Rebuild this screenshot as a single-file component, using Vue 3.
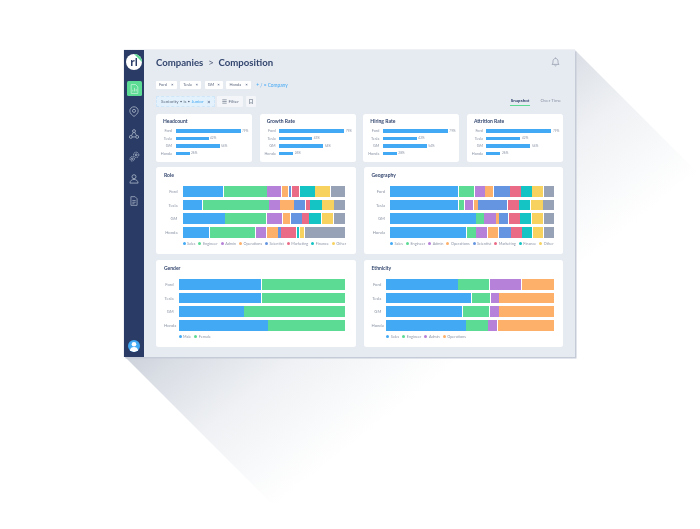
<script setup>
const c = { sa:'#42a9f5', en:'#5bdb93', ad:'#b681d8', op:'#fdb069', sc:'#6595e0', ma:'#e96b85', fi:'#14c3c3', ot:'#f7d25f', gr:'#98a2b6' }
const roleKeys = ['sa','en','ad','op','sc','ma','fi','ot','gr']
const mk = (keys, rows) => rows.map(r => ({ name: r[0], segs: r.slice(1).map((w, i) => ({ w, color: c[keys[i]] })) }))
const minis = [
  { title:'Headcount', v:[[65,'79%'],[33,'42%'],[44,'54%'],[14,'26%']] },
  { title:'Growth Rate', v:[[65,'79%'],[33,'43%'],[44,'54%'],[14,'26%']] },
  { title:'Hiring Rate', v:[[65,'79%'],[34,'42%'],[44,'54%'],[14,'28%']] },
  { title:'Attrition Rate', v:[[65,'79%'],[34,'42%'],[44,'54%'],[14,'26%']] },
]
const names = ['Ford','Tesla','GM','Honda']
const legend8 = ['Sales','Engineer','Admin','Operations','Scientist','Marketing','Finance','Other']
const charts = [
  { title:'Role', lw:18.5, legend:legend8, keys:roleKeys,
    rows: mk(roleKeys, [
      ['Ford',125,133,42,21,7,23,46,45,44],
      ['Tesla',60,204,32,42,33,12,35,35,33],
      ['GM',130,127,47,22,35,19,36,36,34],
      ['Honda',82,140,32,34,8,46,7,13,124],
    ]) },
  { title:'Geography', lw:18.5, legend:legend8, keys:roleKeys,
    rows: mk(roleKeys, [
      ['Ford',211,47,31,25,48,32,33,34,31],
      ['Tesla',210,18,26,12,88,35,33,37,33],
      ['GM',265,23,35,7,27,35,33,35,32],
      ['Honda',236,27,33,33,36,33,30,33,31],
    ]) },
  { title:'Gender', lw:14.6, legend:['Male','Female'], keys:['sa','en'],
    rows: mk(['sa','en'], [
      ['Ford',248,249],['Tesla',247,250],['GM',195,302],['Honda',267,230],
    ]) },
  { title:'Ethnicity', lw:14.8, legend:['Sales','Engineer','Admin','Operations'], keys:['sa','en','ad','op'],
    rows: mk(['sa','en','ad','op'], [
      ['Ford',217,93,96,97],['Tesla',257,57,23,166],['GM',230,80,27,166],['Honda',241,64,28,170],
    ]) },
]
charts.forEach(ch => { ch.dots = ch.legend.map((l, i) => ({ l, color: c[ch.keys[i]] })) })
</script>

<template>
  <div class="stage">
    <svg class="shadow" width="700" height="529" viewBox="0 0 700 529">
      <defs>
        <linearGradient id="sh" gradientUnits="userSpaceOnUse" x1="211" y1="265" x2="353" y2="445">
          <stop offset="0" stop-color="#c6cdd8"/>
          <stop offset="0.07" stop-color="#cbd1da"/>
          <stop offset="0.24" stop-color="#dadee5"/>
          <stop offset="0.55" stop-color="#eff1f4"/>
          <stop offset="0.83" stop-color="#f9fafb"/>
          <stop offset="1" stop-color="#ffffff"/>
        </linearGradient>
      </defs>
      <polygon points="125,357 575,357 575,50 754,229 416,529 297,529" fill="url(#sh)"/>
    </svg>
    <div class="window">
      <aside class="side">
        <div class="logo"><span>rl</span><i></i></div>
        <div class="cell">
          <div class="tile">
            <svg width="9" height="10" viewBox="0 0 10 12" fill="none" stroke="#cdf3de" stroke-width=".9"><path d="M1 .7h5.300L9 3.400v7.900H1z"/><path d="M3 9V7M5 9V4.600M7 9V6"/></svg>
          </div>
        </div>
        <div class="cell"><svg width="10" height="11" viewBox="0 0 11 12" fill="none" stroke="#aab5c8" stroke-width=".9"><path d="M5.500.8a4.600 4.600 0 0 1 4.600 4.600c0 2.600-2.600 4.600-4.600 6-2-1.400-4.600-3.400-4.600-6A4.600 4.600 0 0 1 5.500.8z"/><circle cx="5.500" cy="5.300" r="1.700"/></svg></div>
        <div class="cell"><svg width="10" height="10" viewBox="0 0 11 11" fill="none" stroke="#aab5c8" stroke-width=".9"><circle cx="5.500" cy="2.300" r="1.600"/><circle cx="2" cy="8.700" r="1.600"/><circle cx="9" cy="8.700" r="1.600"/><path d="M4.700 3.700 2.800 7.300M6.300 3.700 8.200 7.300M3.600 8.700h3.800"/></svg></div>
        <div class="cell"><svg width="11" height="11" viewBox="0 0 12 12" fill="none" stroke="#aab5c8" stroke-width="1"><circle cx="7.800" cy="4.200" r="2.900" stroke-dasharray="1.400 .7"/><circle cx="7.800" cy="4.200" r="1"/><circle cx="3.500" cy="8.500" r="2.400" stroke-dasharray="1.200 .6"/><circle cx="3.500" cy="8.500" r=".8"/></svg></div>
        <div class="cell"><svg width="10" height="10" viewBox="0 0 11 11" fill="none" stroke="#aab5c8" stroke-width=".9"><circle cx="5.500" cy="3" r="2.200"/><path d="M1 10c.3-2.800 2.200-4 4.500-4s4.200 1.200 4.500 4z"/></svg></div>
        <div class="cell"><svg width="8" height="10" viewBox="0 0 9 12" fill="none" stroke="#aab5c8" stroke-width=".9"><path d="M.8.800h5l2.400 2.500v7.900H.8z"/><path d="M2.500 5.500h4M2.500 7.500h4M2.500 9.300h2.500"/></svg></div>
        <div class="avatar">
          <svg width="12" height="12" viewBox="0 0 12 12"><circle cx="6" cy="4.200" r="2.300" fill="#fff"/><path d="M1.800 10.600c.4-2.500 2-3.500 4.200-3.500s3.800 1 4.200 3.500A6 6 0 0 1 6 12a6 6 0 0 1-4.200-1.400z" fill="#fff"/></svg>
        </div>
      </aside>
      <main class="main">
        <header class="top">
          <h1>Companies <span class="gt">&gt;</span> Composition</h1>
          <svg class="bell" width="9" height="10" viewBox="0 0 9 10" fill="none" stroke="#8c95a6" stroke-width=".7"><path d="M1 7.400c.8-.8 1-1.600 1-3.200C2 2.700 3 1.500 4.500 1.500S7 2.700 7 4.200c0 1.600.2 2.400 1 3.200z"/><path d="M3.600 8.500c.2.600 1.600.6 1.800 0M4.500.4v1"/></svg>
        </header>
        <div class="chips">
          <span class="chip" v-for="n in names" :key="n">{{ n }} <b>×</b></span>
          <span class="add">+ / = Company</span>
        </div>
        <div class="filters">
          <span class="sen">Seniority • is • <em>Junior</em> <b>×</b></span>
          <span class="fbtn">
            <svg width="5" height="5" viewBox="0 0 5 5" fill="none" stroke="#5f6b80" stroke-width=".6"><path d="M.3.800h4.400M.3 2.500h4.400M.3 4.200h4.400"/></svg>
            Filter
          </span>
          <span class="bm">
            <svg width="4" height="5" viewBox="0 0 4 5" fill="none" stroke="#5f6b80" stroke-width=".6"><path d="M.4.400h3.200v4.200L2 3.500.4 4.600z"/></svg>
          </span>
          <nav class="tabs">
            <span class="tab on">Snapshot</span>
            <span class="tab">Over Time</span>
          </nav>
        </div>
        <section class="minis">
          <article class="card mini" v-for="m in minis" :key="m.title">
            <h3>{{ m.title }}</h3>
            <div class="mrow" v-for="(r, i) in m.v" :key="i">
              <label>{{ names[i] }}</label>
              <i :style="{ width: r[0] + 'px' }"></i>
              <small>{{ r[1] }}</small>
            </div>
          </article>
        </section>
        <section class="charts">
          <article class="card chart" v-for="ch in charts" :key="ch.title">
            <h3>{{ ch.title }}</h3>
            <div class="brow" v-for="r in ch.rows" :key="r.name" :style="{ gridTemplateColumns: ch.lw + 'px 1fr' }">
              <label>{{ r.name }}</label>
              <div class="bar">
                <i v-for="(s, i) in r.segs" :key="i" :style="{ flexGrow: s.w, background: s.color }"></i>
              </div>
            </div>
            <div class="legend" :style="{ paddingLeft: ch.lw + 'px' }">
              <span v-for="d in ch.dots" :key="d.l"><i :style="{ background: d.color }"></i>{{ d.l }}</span>
            </div>
          </article>
        </section>
      </main>
    </div>
  </div>
</template>

<style>
html, body { margin: 0; background: #fff; }
</style>

<style scoped>
.stage { position: relative; width: 700px; height: 529px; overflow: hidden; padding: 50px 0 0 124px; box-sizing: border-box; font-family: Lato, "Open Sans", sans-serif; color: #2a3c66; }
.shadow { position: absolute; left: 0; top: 0; }
.window { position: relative; width: 451px; height: 307px; display: flex; background: #e6eaf1; box-shadow: 0 -1px 0 #eef0f4, -1px 0 0 #f0f2f5, 1.500px 1.500px 0 #c6ccd7; filter: blur(.25px); }
.side { width: 20px; background: #2a3c66; display: flex; flex-direction: column; align-items: center; padding-top: 4px; box-sizing: border-box; }
.logo { position: relative; width: 16px; height: 16px; border-radius: 50%; background: #fff; display: flex; align-items: center; justify-content: center; overflow: hidden; margin-bottom: 7.250px; flex: none; }
.logo span { font: 700 10px/1 "Open Sans", sans-serif; color: #2a3c66; }
.logo i { position: absolute; right: 0; top: 0; width: 8px; height: 8px; background: #5bdb93; clip-path: polygon(0 0, 100% 100%, 100% 0); }
.cell { height: 22.500px; flex: none; display: flex; align-items: center; justify-content: center; }
.tile { width: 15px; height: 15px; background: #5bdb93; border-radius: 1.500px; display: flex; align-items: center; justify-content: center; }
.avatar { margin-top: auto; margin-bottom: 5px; width: 12px; height: 12px; border-radius: 50%; background: #42a9f5; display: flex; align-items: flex-end; justify-content: center; overflow: hidden; }
.main { flex: 1; padding: 0 12px 0 12px; box-sizing: border-box; min-width: 0; }
.top { display: flex; justify-content: space-between; align-items: center; height: 24px; margin-bottom: 7px; }
h1 { margin: 0; font-size: 9.600px; font-weight: 700; color: #33466e; white-space: nowrap; }
.gt { font-weight: 400; margin: 0 2.500px; color: #55627e; }
.bell { margin-right: 3px; }
.chips { display: flex; align-items: center; gap: 3.500px; height: 8px; margin-bottom: 7px; }
.chip { height: 8px; background: #fff; border-radius: 1px; font-size: 4px; line-height: 8px; padding: 0 3px; color: #5f6b80; white-space: nowrap; display: inline-flex; align-items: center; justify-content: space-between; box-sizing: border-box; gap: 2px; min-width: 18px; }
.chip:nth-child(1) { width: 20.700px; }
.chip:nth-child(2) { width: 21px; }
.chip:nth-child(3) { width: 18.300px; }
.chip:nth-child(4) { width: 24.300px; }
.chip b { font-size: 4.500px; font-weight: 400; color: #2a3c66; }
.add { margin-left: 2px; font-size: 4.800px; color: #42a9f5; white-space: nowrap; }
.filters { display: flex; align-items: center; height: 11px; gap: 2.400px; margin-bottom: 7px; }
.sen { height: 10.500px; box-sizing: border-box; background: #e3f1fc; border: .5px dashed #cfe6f8; border-radius: 1px; padding: 0 3px 0 4px; font-size: 4.500px; color: #5f6b80; white-space: nowrap; display: flex; align-items: center; gap: 1.200px; width: 58.500px; }
.sen em { font-style: normal; color: #42a9f5; }
.sen b { margin-left: auto; font-weight: 400; font-size: 5.500px; color: #2a3c66; }
.fbtn { height: 10.500px; width: 26.600px; background: #f3f5f8; border-radius: 1px; font-size: 4.500px; color: #5f6b80; display: flex; align-items: center; justify-content: center; gap: 2px; }
.bm { height: 10.500px; width: 10px; background: #f3f5f8; border-radius: 1px; display: flex; align-items: center; justify-content: center; }
.tabs { margin-left: auto; margin-right: 1px; display: flex; gap: 9px; font-size: 4.500px; color: #8c95a6; }
.tab { padding: 0 1px 2px; border-bottom: 1.500px solid transparent; white-space: nowrap; }
.tab.on { color: #2a3c66; font-weight: 700; border-bottom-color: #5bdb93; }
.minis { display: grid; grid-template-columns: repeat(4, 96px); justify-content: space-between; margin-bottom: 5px; }
.card { background: #fff; border-radius: 2.500px; box-sizing: border-box; }
h3 { margin: 0; font-size: 5px; font-weight: 700; color: #33466e; line-height: 7px; }
.mini { height: 47.500px; padding: 4px 0 0 7px; }
.mini h3 { margin-bottom: 2px; }
.mrow { display: flex; align-items: center; height: 7.500px; }
.mrow label { width: 13px; flex: none; text-align: right; margin-left: -4px; margin-right: 3.500px; font-size: 3.800px; color: #8c95a6; white-space: nowrap; }
.mrow i { display: block; height: 3.500px; background: #42a9f5; flex: none; }
.mrow small { margin-left: 1.500px; font-size: 3.200px; color: #8c95a6; }
.charts { display: grid; grid-template-columns: 199.500px 199.500px; justify-content: space-between; row-gap: 5.500px; }
.chart { height: 87.500px; padding: 5px 10.700px 0 8px; }
.chart:nth-child(even) { padding-right: 9px; }
.chart h3 { margin-bottom: 6px; }
.brow { display: grid; align-items: center; height: 13.700px; }
.brow label { font-size: 4.200px; color: #8c95a6; text-align: right; padding-right: 5px; white-space: nowrap; }
.bar { display: flex; gap: .600px; height: 10.700px; }
.bar i { display: block; flex: 1 1 0; }
.legend { display: flex; gap: 3px; margin-top: 2px; font-size: 3.800px; color: #8c95a6; white-space: nowrap; }
.legend span { display: inline-flex; align-items: center; gap: 1.500px; }
.legend i { display: block; width: 3px; height: 3px; border-radius: 50%; }
</style>
